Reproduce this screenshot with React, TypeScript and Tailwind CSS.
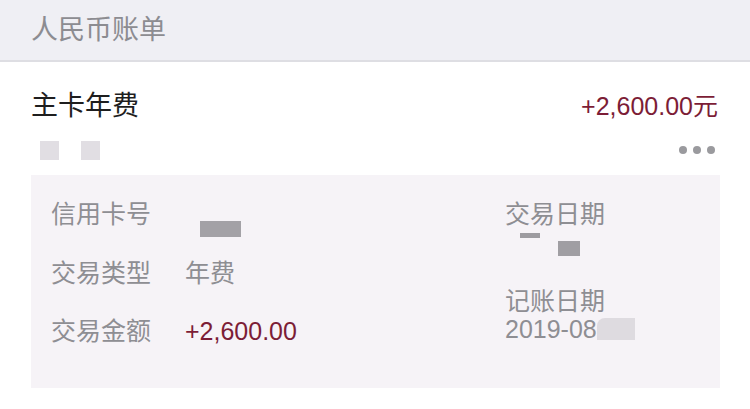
export default function App() {
  return (
    <div
      className="w-[750px] h-[409px] bg-white overflow-hidden"
      style={{ fontFamily: '"Liberation Sans", "Noto Sans CJK SC", sans-serif' }}
    >
      {/* Section header */}
      <div className="h-[62px] bg-[#efeff4] border-b-2 border-[#dedee3] flex items-center pl-[31px]">
        <span className="text-[27px] leading-none text-[#8c8c91]">人民币账单</span>
      </div>

      {/* Bill item */}
      <div className="px-[31px] pr-[32px]">
        <div className="flex items-center justify-between pt-[28px]">
          <span className="text-[27px] leading-[32px] text-[#1e1e1e]">主卡年费</span>
          <span className="text-[25px] leading-[32px] text-[#7c1d36]">+2,600.00元</span>
        </div>

        <div className="flex items-center justify-between h-[36px] mt-[10px]">
          <div className="flex items-center gap-[22px] pl-[9px]">
            <div className="w-[19px] h-[19px] bg-[#e1dee3]" />
            <div className="w-[19px] h-[19px] bg-[#e1dee3]" />
          </div>
          <div className="flex items-center gap-[6px] pr-[3px]">
            <div className="w-[8px] h-[8px] rounded-full bg-[#9a9a9e]" />
            <div className="w-[8px] h-[8px] rounded-full bg-[#9a9a9e]" />
            <div className="w-[8px] h-[8px] rounded-full bg-[#9a9a9e]" />
          </div>
        </div>
      </div>

      {/* Detail panel */}
      <div className="ml-[31px] mr-[30px] mt-[7px] h-[213px] bg-[#f6f3f7] flex pt-[26px] pl-[20px]">
        <div className="w-[454px] flex flex-col">
          <div className="flex h-[59px]">
            <span className="w-[134px] text-[25px] leading-[26px] text-[#8e8e93]">信用卡号</span>
            <div className="mt-[20px] ml-[15px] w-[41px] h-[16px] bg-[#a3a1a6]" />
          </div>
          <div className="flex h-[58px]">
            <span className="w-[134px] text-[25px] leading-[26px] text-[#8e8e93]">交易类型</span>
            <span className="text-[25px] leading-[26px] text-[#8e8e93]">年费</span>
          </div>
          <div className="flex h-[58px]">
            <span className="w-[134px] text-[25px] leading-[26px] text-[#8e8e93]">交易金额</span>
            <span className="text-[25px] leading-[26px] text-[#7c1d36]">+2,600.00</span>
          </div>
        </div>

        <div className="flex flex-col">
          <span className="text-[25px] leading-[26px] text-[#8e8e93]">交易日期</span>
          <div className="relative h-[61px]">
            <div className="absolute left-[15px] top-[6px] w-[20px] h-[5px] bg-[#9d9ba0]" />
            <div className="absolute left-[53px] top-[14px] w-[22px] h-[15px] bg-[#a09ea3]" />
          </div>
          <span className="text-[25px] leading-[26px] text-[#8e8e93]">记账日期</span>
          <div className="flex items-center">
            <span className="text-[25px] leading-[30px] text-[#8e8e93]">2019-08</span>
            <div className="w-[38px] h-[22px] bg-[#dedbe0] rounded-tl-[8px]" />
          </div>
        </div>
      </div>
    </div>
  );
}
